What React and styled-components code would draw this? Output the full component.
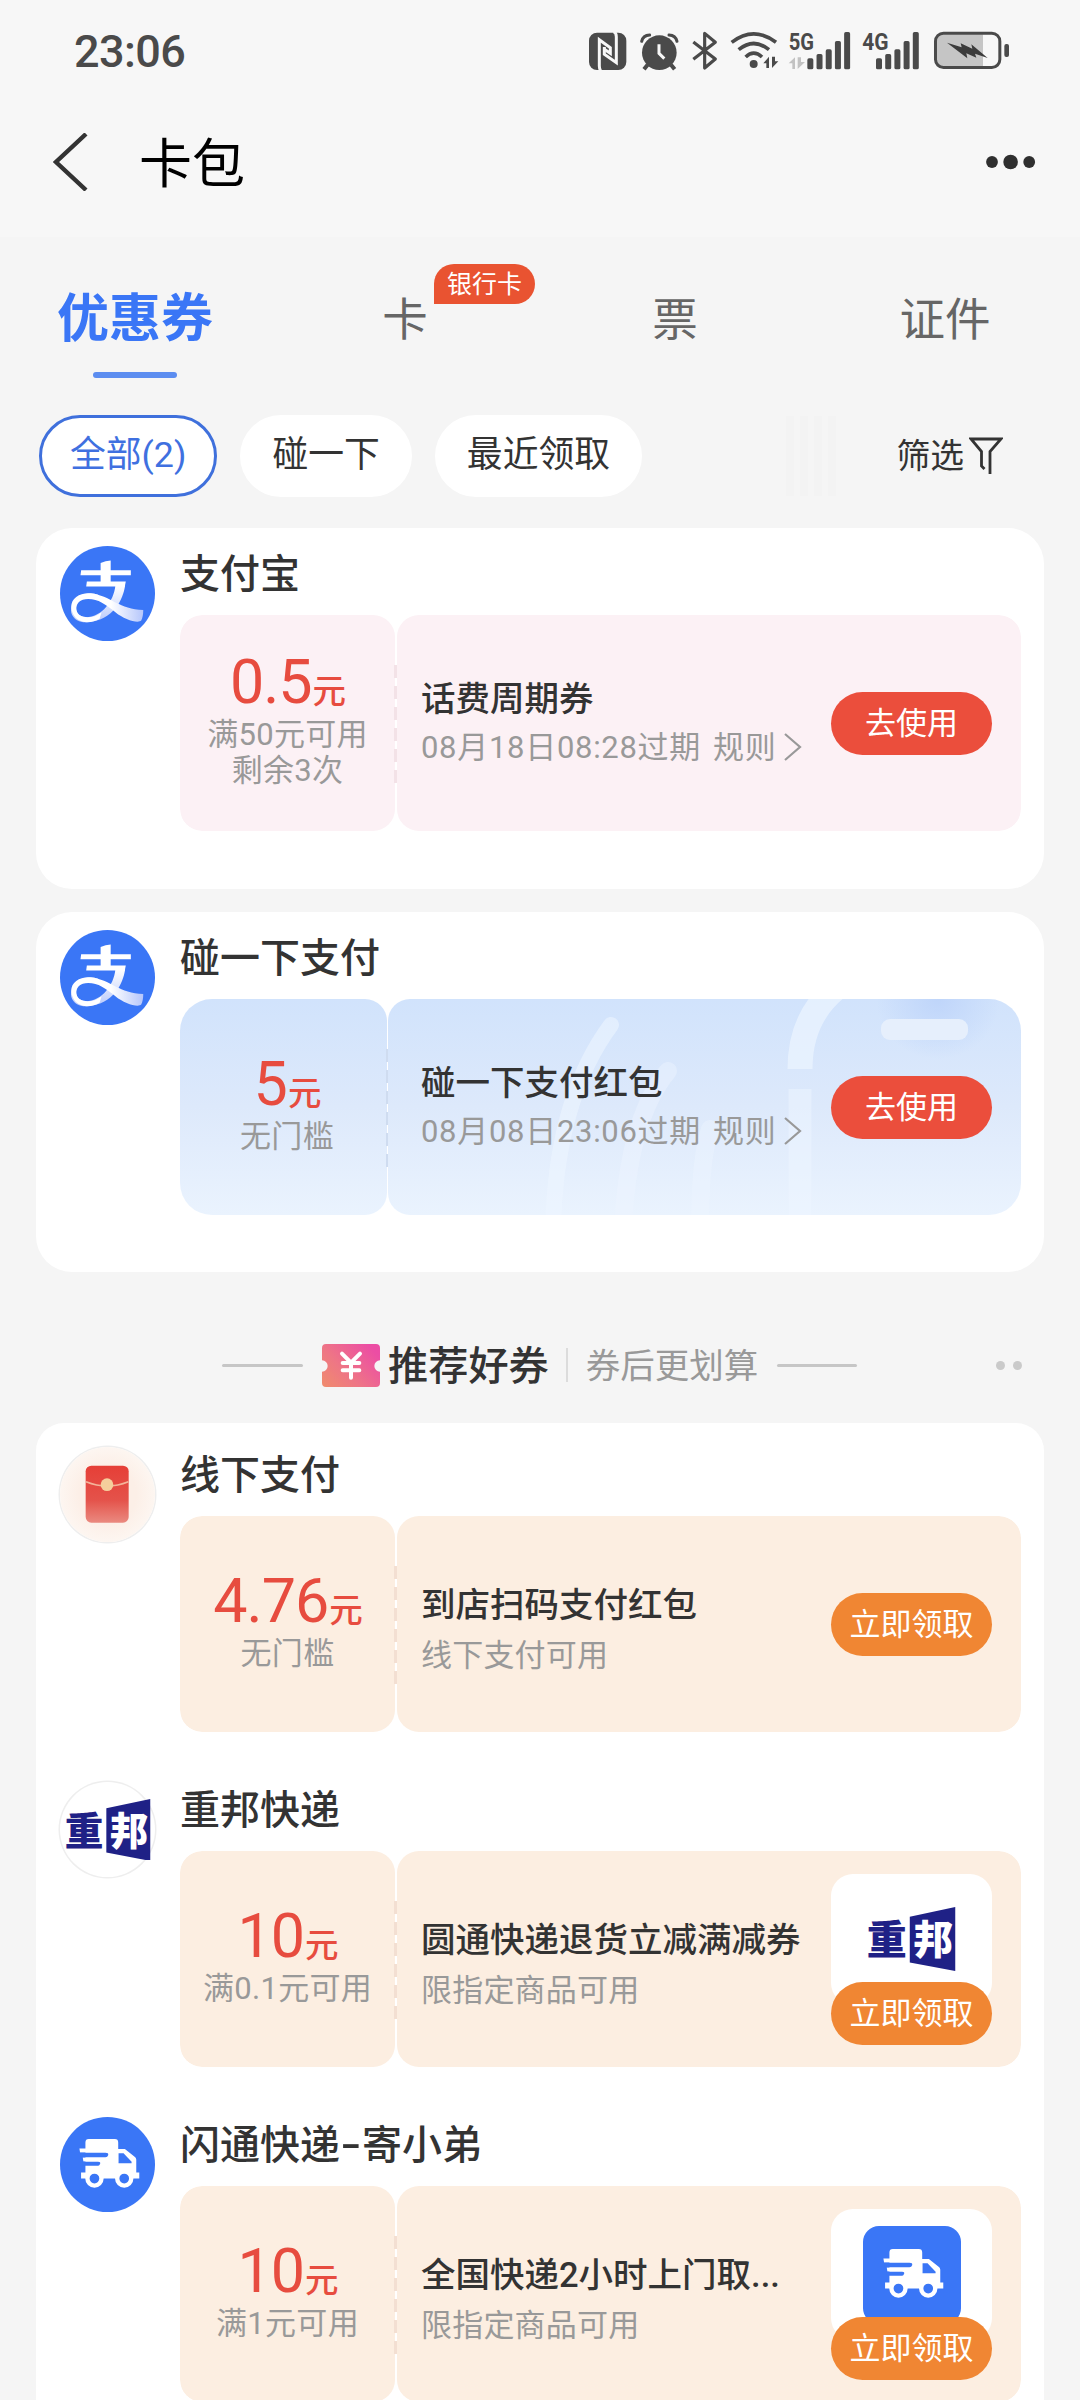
import React from "react";
import styled, { createGlobalStyle } from "styled-components";

const COLORS = {
  page: "#f5f5f5",
  header: "#f7f7f7",
  blue: "#3a76f6",
  text: "#333333",
  muted: "#999999",
  red: "#e74c3f",
  redButton: "#eb4e3c",
  orangeButton: "#f08633",
  status: "#4a4a4a",
  navy: "#1f2186",
};

const TONES = {
  pink: { background: "#fcf1f5", dash: "#f3e2e7" },
  blue: {
    background: "linear-gradient(180deg, #d1e3fc 0%, #dde9fb 50%, #eaf3fe 100%)",
    dash: "#cfdcf0",
  },
  orange: { background: "#fceee1", dash: "#f3dfd2" },
};

const MINE = [
  {
    name: "支付宝",
    logo: "alipay",
    tone: "pink",
    amount: "0.5",
    limits: ["满50元可用", "剩余3次"],
    title: "话费周期券",
    expire: "08月18日08:28过期",
  },
  {
    name: "碰一下支付",
    logo: "alipay",
    tone: "blue",
    amount: "5",
    limits: ["无门槛"],
    title: "碰一下支付红包",
    expire: "08月08日23:06过期",
  },
];

const RECOMMENDED = [
  {
    name: "线下支付",
    logo: "packet",
    amount: "4.76",
    limits: ["无门槛"],
    title: "到店扫码支付红包",
    note: "线下支付可用",
  },
  {
    name: "重邦快递",
    logo: "zhongbang",
    amount: "10",
    limits: ["满0.1元可用"],
    title: "圆通快递退货立减满减券",
    note: "限指定商品可用",
    picture: "zhongbang",
  },
  {
    name: "闪通快递-寄小弟",
    logo: "van",
    amount: "10",
    limits: ["满1元可用"],
    title: "全国快递2小时上门取...",
    note: "限指定商品可用",
    picture: "van",
  },
];

const StatusIcons = () => (
  <IconRow>
    <svg width="44.67" height="42" viewBox="86 90 134 126">
      <rect x="86" y="98" width="112" height="112" rx="24" fill={COLORS.status} />
      <g fill="none" stroke={COLORS.header} strokeWidth="9">
        <path d="M121 213Q117 207 117 198V119L150 143V160L132 148" />
        <path d="M160 95Q168 99 168 110V188L132 163V141" />
      </g>
    </svg>
    <svg width="51.67" height="42" viewBox="220 90 155 126">
      <circle cx="299" cy="158" r="52" fill={COLORS.status} />
      <g fill="none" stroke={COLORS.status}>
        <path d="M246 124Q250 106 270 105" strokeWidth="9" strokeLinecap="round" />
        <path d="M352 124Q348 106 328 105" strokeWidth="9" strokeLinecap="round" />
        <path d="M264 194L253 208M334 194L345 208" strokeWidth="12" />
      </g>
      <path d="M298 133V160L314 176" fill="none" stroke={COLORS.header} strokeWidth="9" />
    </svg>
    <svg width="38.33" height="42" viewBox="375 90 115 126">
      <path
        d="M400 126L466 177L434 204V100L466 127L400 178"
        fill="none"
        stroke={COLORS.status}
        strokeWidth="9.5"
        strokeLinejoin="round"
      />
    </svg>
    <svg width="60" height="42" viewBox="490 90 180 126">
      <g fill="none" stroke={COLORS.status} strokeWidth="11">
        <path d="M516 127Q582 76 649 127" />
        <path d="M537 149Q582 112 628 149" />
        <path d="M558 171Q582 148 607 171" />
      </g>
      <circle cx="582" cy="192" r="12" fill={COLORS.status} />
      <path d="M611 190L628 170V204H620V190ZM637 170V204L656 184H646V170Z" fill={COLORS.status} />
    </svg>
    <svg width="73.33" height="62" viewBox="670 60 220 186">
      <SignalText x="687" y="150" textLength="76" lengthAdjust="spacingAndGlyphs">5G</SignalText>
      <path d="M687 190L706 172V207H698V190ZM714 172V207L736 186H724V172Z" fill="#c2c2c2" />
      <SignalBars x={743} />
    </svg>
    <svg width="70" height="62" viewBox="890 60 210 186">
      <SignalText x="906" y="150" textLength="79" lengthAdjust="spacingAndGlyphs">4G</SignalText>
      <SignalBars x={947} />
    </svg>
    <svg width="83.33" height="42" viewBox="1100 90 250 126">
      <path d="M1142 103H1268V200H1142Q1130 200 1130 188V115Q1130 103 1142 103Z" fill="#c5c5c5" />
      <rect
        x="1125.5"
        y="99.5"
        width="193"
        height="103"
        rx="24"
        fill="none"
        stroke={COLORS.status}
        strokeWidth="9"
      />
      <rect x="1332" y="132" width="14" height="39" rx="6" fill={COLORS.status} />
      <path
        d="M1160 128L1204 142L1201 130L1236 146L1233 133L1282 174L1244 161L1248 173L1218 160L1221 175Z"
        fill="#3b3b3b"
      />
    </svg>
  </IconRow>
);

const SignalBars = ({ x }) =>
  [175, 162, 148, 123, 96].map((top, i) => (
    <rect
      key={top}
      x={x + i * 27.6}
      y={top}
      width="18"
      height={208 - top}
      rx="5"
      fill={COLORS.status}
    />
  ));

const AlipayLogo = () => (
  <svg width="95" height="95" viewBox="0 0 283 283">
    <defs>
      <linearGradient id="leg" x1="0" y1="0" x2="0" y2="1">
        <stop offset="0" stopColor="#ffffff" />
        <stop offset="1" stopColor="#b9c9fb" />
      </linearGradient>
      <linearGradient id="tail" x1="0" y1="0" x2="1" y2="0">
        <stop offset="0.55" stopColor="#ffffff" />
        <stop offset="1" stopColor="#b5c6fb" />
      </linearGradient>
    </defs>
    <circle cx="141.5" cy="141.5" r="141.5" fill={COLORS.blue} />
    <path d="M121 51Q136 43 151 43V112H121Z" fill="#fff" />
    <path d="M63 72H211V87H61ZM80 106H196L193 121H78Z" fill="#fff" />
    <path
      d="M165 118H194C188 158 160 224 80 227C30 228 24 184 42 162C56 144 84 137 114 145L106 158C80 150 58 157 51 172C42 192 52 212 82 212C124 210 160 166 165 118Z"
      fill="url(#leg)"
    />
    <path
      d="M34 182C32 154 62 138 92 141C150 148 178 190 248 191C248 204 246 215 242 222C232 232 190 218 166 198C136 174 114 158 84 158C60 158 46 172 49 190C52 204 62 212 82 212C98 212 112 206 124 197L118 217C106 224 92 228 78 227C52 226 35 208 34 182Z"
      fill="url(#tail)"
    />
  </svg>
);

const PacketLogo = () => (
  <svg width="95" height="95" viewBox="0 0 285 285">
    <defs>
      <linearGradient id="packet" x1="0" y1="0" x2="0" y2="1">
        <stop offset="0" stopColor="#e63f37" />
        <stop offset="0.6" stopColor="#e4524a" />
        <stop offset="1" stopColor="#ea8a80" />
      </linearGradient>
      <radialGradient id="packetBg">
        <stop offset="0.6" stopColor="#fcefe7" />
        <stop offset="1" stopColor="#fdf6f1" />
      </radialGradient>
    </defs>
    <circle cx="142.5" cy="142.5" r="142.5" fill="url(#packetBg)" />
    <rect x="77" y="56" width="129" height="171" rx="17" fill="url(#packet)" />
    <path d="M78 104Q142 130 205 104" fill="none" stroke="#f3b49a" strokeWidth="5" />
    <circle cx="141" cy="113" r="19" fill="#f5cf9c" />
  </svg>
);

const ZhongbangLogo = ({ width }) => (
  <svg width={width} height={width * 0.72} viewBox="0 0 258 186">
    <path d="M124 28L256 0V186L124 161Z" fill={COLORS.navy} />
    <LogoText x="-1" y="137" fill={COLORS.navy}>
      重
    </LogoText>
    <LogoText x="134" y="137" fill="#fff">
      邦
    </LogoText>
  </svg>
);

// body, cab, wheels, then the speed lines cut out of the rear
const VanDrawing = () => (
  <svg width="95" height="95" viewBox="0 0 284 284">
    <path
      d="M76 76Q76 66 86 66H164Q174 66 174 76V96H194L225 120Q228 123 228 128V166H237V184H217A26 26 0 0 1 167 184H129A26 26 0 0 1 79 184H63V166H76Z"
      fill="#fff"
    />
    <path d="M58 94H90V106H60ZM68 121H90V133H70Z" fill="#fff" />
    <path d="M60 107H136Q146 107 144 114Q142 120 136 120H60ZM68 134H114Q122 134 120 140Q118 146 114 146H68Z" fill={COLORS.blue} />
    <path d="M175 108H190L214 134V138H175Z" fill={COLORS.blue} />
    <g fill={COLORS.blue} stroke="#fff" strokeWidth="13">
      <circle cx="103" cy="184" r="21" />
      <circle cx="192" cy="184" r="21" />
    </g>
  </svg>
);

const Avatar = ({ kind }) => {
  if (kind === "alipay") {
    return (
      <AvatarCircle>
        <AlipayLogo />
      </AvatarCircle>
    );
  }
  if (kind === "van") {
    return (
      <AvatarCircle $fill={COLORS.blue}>
        <VanDrawing />
      </AvatarCircle>
    );
  }
  return (
    <AvatarCircle $bordered>
      {kind === "packet" ? <PacketLogo /> : <ZhongbangLogo width={86} />}
    </AvatarCircle>
  );
};

const TapPattern = () => (
  <Pattern width="634" height="216" viewBox="0 0 634 216">
    <defs>
      <radialGradient id="glow">
        <stop offset="0" stopColor="#bfd5fa" />
        <stop offset="1" stopColor="#bfd5fa" stopOpacity="0" />
      </radialGradient>
    </defs>
    <ellipse cx="550" cy="0" rx="62" ry="60" fill="url(#glow)" />
    <g fill="none" stroke="#edf5ff" strokeLinecap="round">
      <path d="M223 26Q168 100 165 230" strokeWidth="16" strokeOpacity="0.6" />
      <path d="M280 72Q240 120 235 230" strokeWidth="18" strokeOpacity="0.45" />
      <path d="M322 130Q312 160 312 230" strokeWidth="18" strokeOpacity="0.4" />
      <path d="M452 -14Q412 16 412 70" strokeWidth="25" strokeOpacity="0.7" strokeLinecap="butt" />
      <path d="M412 90V216" strokeWidth="23" strokeOpacity="0.5" strokeLinecap="butt" />
    </g>
    <rect x="493" y="20" width="87" height="21" rx="9" fill="#e6effc" />
  </Pattern>
);

const Coupon = ({ item, tone }) => {
  const isMine = Boolean(item.expire);
  return (
    <CouponRow $tone={tone}>
      <Price $tone={tone}>
        <Amount>
          {item.amount}
          <Unit>元</Unit>
        </Amount>
        {item.limits.map((limit) => (
          <Limit key={limit}>{limit}</Limit>
        ))}
        <Dashes $tone={tone} />
      </Price>
      <Detail $tone={tone}>
        {tone === "blue" && <TapPattern />}
        <Info $mine={isMine}>
          <CouponTitle>{item.title}</CouponTitle>
          {isMine ? (
            <Note $mine>
              {item.expire}
              <Rules>规则</Rules>
              <svg width="18" height="28" viewBox="0 0 18 28">
                <path d="M1 1L16 14L1 27" fill="none" stroke={COLORS.muted} strokeWidth="2.2" />
              </svg>
            </Note>
          ) : (
            <Note>{item.note}</Note>
          )}
        </Info>
        {item.picture ? (
          <PictureAction>
            <PictureBox>
              {item.picture === "van" ? (
                <VanTile>
                  <VanDrawing />
                </VanTile>
              ) : (
                <ZhongbangLogo width={89} />
              )}
            </PictureBox>
            <ActionButton $color={COLORS.orangeButton}>立即领取</ActionButton>
          </PictureAction>
        ) : (
          <ActionButton $color={isMine ? COLORS.redButton : COLORS.orangeButton}>
            {isMine ? "去使用" : "立即领取"}
          </ActionButton>
        )}
      </Detail>
    </CouponRow>
  );
};

const Merchant = ({ item, tone }) => {
  const [head, tail] = item.name.split("-");
  return (
    <MerchantRow>
      <Avatar kind={item.logo} />
      <MerchantBody>
        <MerchantName>
          {head}
          {tail && <Hyphen>-</Hyphen>}
          {tail}
        </MerchantName>
        <Coupon item={item} tone={tone} />
      </MerchantBody>
    </MerchantRow>
  );
};

const App = () => {
  return (
    <Page>
      <GlobalStyle />
      <Header>
        <StatusBar>
          <Clock>23:06</Clock>
          <StatusIcons />
        </StatusBar>
        <NavBar>
          <svg width="35" height="58" viewBox="0 0 35 58">
            <path d="M33 1L3 29L33 57" fill="none" stroke="#333" strokeWidth="4.4" />
          </svg>
          <NavTitle>卡包</NavTitle>
          <svg width="52" height="16" viewBox="0 0 52 16">
            <g fill="#2f2f2f">
              <circle cx="7" cy="8" r="5.9" />
              <circle cx="25.6" cy="8" r="7.3" />
              <circle cx="44.2" cy="8" r="5.9" />
            </g>
          </svg>
        </NavBar>
      </Header>

      <Tabs>
        <Tab $active>
          优惠券
          <Underline />
        </Tab>
        <Tab>
          卡<Badge>银行卡</Badge>
        </Tab>
        <Tab>票</Tab>
        <Tab>证件</Tab>
      </Tabs>

      <Filters>
        <Pill $active>全部(2)</Pill>
        <Pill>碰一下</Pill>
        <Pill>最近领取</Pill>
        <Fade />
        <FilterButton>
          <span>筛选</span>
          <svg width="34" height="38" viewBox="0 0 34 38">
            <path
              d="M15.5 32L12.5 29V14.5L2 2H32L21 14.5V37"
              fill="none"
              stroke="#333"
              strokeWidth="2.8"
            />
          </svg>
        </FilterButton>
      </Filters>

      {MINE.map((item, i) => (
        <MineCard key={item.name} $height={i === 0 ? 361 : 360}>
          <Merchant item={item} tone={item.tone} />
        </MineCard>
      ))}

      <SectionTitle>
        <Rule $width={81} />
        <svg width="58" height="43" viewBox="0 0 174 129">
          <defs>
            <linearGradient id="ticket" x1="0" y1="1" x2="1" y2="0.3">
              <stop offset="0" stopColor="#f08c6c" />
              <stop offset="0.45" stopColor="#ee7586" />
              <stop offset="1" stopColor="#ec4da4" />
            </linearGradient>
          </defs>
          <path
            d="M12 0H162Q174 0 174 12V49A17 17 0 0 0 174 83V117Q174 129 162 129H12Q0 129 0 117V83A17 17 0 0 0 0 49V12Q0 0 12 0Z"
            fill="url(#ticket)"
          />
          <path
            d="M60 29L87 56L114 29M87 56V101M62 57H112M62 79H112"
            fill="none"
            stroke="#fff"
            strokeWidth="12"
            strokeLinecap="round"
          />
        </svg>
        <SectionName>推荐好券</SectionName>
        <SectionDivider />
        <SectionHint>券后更划算</SectionHint>
        <Rule $width={80} />
        <MoreDots>
          <span />
          <span />
        </MoreDots>
      </SectionTitle>

      <RecommendCard>
        {RECOMMENDED.map((item) => (
          <Merchant key={item.name} item={item} tone="orange" />
        ))}
      </RecommendCard>
    </Page>
  );
};

const GlobalStyle = createGlobalStyle`
  * {
    box-sizing: border-box;
  }

  body {
    margin: 0;
    background: ${COLORS.page};
  }

  svg {
    display: block;
    flex-shrink: 0;
  }
`;

const Page = styled.div`
  width: 1080px;
  height: 2400px;
  overflow: hidden;
  display: flex;
  flex-direction: column;
  background: ${COLORS.page};
  color: ${COLORS.text};
  font-family: Roboto, "Noto Sans CJK SC", sans-serif;
  white-space: nowrap;
`;

const Header = styled.header`
  height: 237px;
  flex-shrink: 0;
  background: ${COLORS.header};
`;

const StatusBar = styled.div`
  height: 102px;
  padding: 0 70px 0 74px;
  display: flex;
  align-items: center;
  justify-content: space-between;
`;

const Clock = styled.div`
  font-size: 45px;
  font-weight: 500;
  color: ${COLORS.status};
  letter-spacing: -0.6px;
`;

const IconRow = styled.div`
  display: flex;
  align-items: center;
`;

const SignalText = styled.text`
  font-family: Roboto, sans-serif;
  font-size: 74px;
  font-weight: 700;
  fill: ${COLORS.status};
`;

const NavBar = styled.div`
  height: 120px;
  padding: 0 43px 0 53px;
  display: flex;
  align-items: center;
`;

const NavTitle = styled.h1`
  flex: 1;
  margin: 0 0 0 51px;
  padding-top: 5px;
  font-size: 53px;
  font-weight: 400;
  line-height: 60px;
  color: #000;
`;

const Tabs = styled.nav`
  display: grid;
  grid-template-columns: repeat(4, 1fr);
  height: 141px;
  flex-shrink: 0;
`;

const Tab = styled.div`
  position: relative;
  display: flex;
  flex-direction: column;
  align-items: center;
  padding-top: ${({ $active }) => ($active ? 49 : 50)}px;
  line-height: 68px;
  font-size: ${({ $active }) => ($active ? 52 : 45.5)}px;
  font-weight: ${({ $active }) => ($active ? 700 : 400)};
  color: ${({ $active }) => ($active ? COLORS.blue : "#666")};
`;

const Underline = styled.div`
  width: 84px;
  height: 6px;
  margin-top: 18px;
  border-radius: 3px;
  background: #5c8df0;
`;

const Badge = styled.span`
  position: absolute;
  left: 164px;
  top: 27px;
  width: 101px;
  height: 40px;
  border-radius: 20px 20px 20px 0;
  background: #e95331;
  color: #fff;
  font-size: 25px;
  line-height: 41px;
  text-align: center;
`;

const Filters = styled.div`
  display: flex;
  align-items: center;
  gap: 23px;
  flex-shrink: 0;
  height: 82px;
  margin: 37px 77px 31px 39px;
`;

const Pill = styled.div`
  height: 82px;
  padding: 0 ${({ $active }) => ($active ? 28 : 32)}px;
  border: ${({ $active }) => ($active ? "3px solid #3f70dc" : "0")};
  border-radius: 41px;
  background: #fff;
  color: ${({ $active }) => ($active ? "#3f70e0" : COLORS.text)};
  font-size: 35.8px;
  line-height: ${({ $active }) => ($active ? 75 : 81)}px;
`;

const Fade = styled.div`
  width: 55px;
  height: 80px;
  margin-left: auto;
  background: repeating-linear-gradient(90deg, #f3f3f3 0 8px, #f5f5f5 8px 14px);
`;

const FilterButton = styled.div`
  display: flex;
  align-items: center;
  gap: 5px;
  margin-left: 32px;
  font-size: 33.8px;

  span {
    padding-bottom: 5px;
  }
`;

const Card = styled.section`
  flex-shrink: 0;
  margin: 0 36px;
  padding: 0 23px 0 24px;
  background: #fff;
`;

const MineCard = styled(Card)`
  height: ${({ $height }) => $height}px;
  margin-bottom: 23px;
  padding-top: 18px;
  border-radius: 36px;
`;

const RecommendCard = styled(Card)`
  display: flex;
  flex-direction: column;
  gap: 50px;
  padding-top: 24px;
  border-radius: 28px 28px 0 0;
`;

const MerchantRow = styled.div`
  display: flex;
  align-items: flex-start;
`;

const AvatarCircle = styled.div`
  width: 95px;
  height: 95px;
  flex-shrink: 0;
  display: flex;
  align-items: center;
  justify-content: center;
  border-radius: 50%;
  background: ${({ $fill }) => $fill || "#fff"};
  box-shadow: ${({ $bordered }) => ($bordered ? "0 0 0 1.5px #eeeeee" : "none")};
`;

const MerchantBody = styled.div`
  flex: 1;
  margin-left: 25px;
`;

const MerchantName = styled.div`
  height: 69px;
  padding-top: 2px;
  font-size: 40px;
  font-weight: 500;
  line-height: 54px;
`;

const Hyphen = styled.span`
  display: inline-block;
  width: 22px;
  text-align: center;
  transform: scaleX(1.5);
`;

const CouponRow = styled.div`
  display: flex;
  gap: ${({ $tone }) => ($tone === "blue" ? 1 : 2)}px;
  height: 216px;
  border-radius: ${({ $tone }) => ($tone === "blue" ? 32 : 22)}px;
  overflow: hidden;
`;

const Price = styled.div`
  position: relative;
  width: ${({ $tone }) => ($tone === "blue" ? 207 : 215)}px;
  padding: 0 0 10px ${({ $tone }) => ($tone === "blue" ? 7 : 0)}px;
  display: flex;
  flex-direction: column;
  align-items: center;
  justify-content: center;
  border-radius: 22px;
  background: ${({ $tone }) => TONES[$tone].background};
`;

const Amount = styled.div`
  color: ${COLORS.red};
  font-size: 61px;
  line-height: 68px;
  height: 69px;
  letter-spacing: -1px;
`;

const Unit = styled.span`
  margin-left: 1px;
  font-size: 33.5px;
  font-weight: 500;
`;

const Limit = styled.div`
  color: ${COLORS.muted};
  font-size: 31px;
  line-height: 36px;
  letter-spacing: 0.3px;
`;

const Dashes = styled.div`
  position: absolute;
  right: -2px;
  top: 50px;
  width: 3px;
  height: 118px;
  background: repeating-linear-gradient(
    180deg,
    ${({ $tone }) => TONES[$tone].dash} 0 13px,
    transparent 13px 21px
  );
`;

const Detail = styled.div`
  position: relative;
  flex: 1;
  padding: 0 29px 0 ${({ $tone }) => ($tone === "blue" ? 33 : 24)}px;
  display: flex;
  align-items: center;
  justify-content: space-between;
  border-radius: 22px;
  background: ${({ $tone }) => TONES[$tone].background};
  overflow: hidden;
`;

const Pattern = styled.svg`
  position: absolute;
  left: 0;
  top: 0;
`;

const Info = styled.div`
  position: relative;
  width: 388px;
  padding: ${({ $mine }) => ($mine ? "0 0 2px" : "13px 0 0")};
`;

const CouponTitle = styled.div`
  font-size: 34.5px;
  font-weight: 500;
  line-height: 50px;
`;

const Note = styled.div`
  display: flex;
  align-items: center;
  color: ${COLORS.muted};
  font-size: 31px;
  line-height: ${({ $mine }) => ($mine ? 47 : 51)}px;
  letter-spacing: ${({ $mine }) => ($mine ? 0.7 : 0.2)}px;
`;

const Rules = styled.span`
  margin: 0 8px 0 12px;
`;

const ActionButton = styled.button`
  position: relative;
  width: 161px;
  height: 63px;
  padding: 0;
  border: 0;
  border-radius: 32px;
  background: ${({ $color }) => $color};
  color: #fff;
  font-family: inherit;
  font-size: 31px;
  line-height: 63px;
`;

const PictureAction = styled.div`
  display: flex;
  flex-direction: column;
  padding-top: 1px;
`;

const PictureBox = styled.div`
  width: 161px;
  height: 131px;
  margin-bottom: -23px;
  display: flex;
  align-items: center;
  justify-content: center;
  border-radius: 22px;
  background: #fff;
`;

const VanTile = styled.div`
  width: 98px;
  height: 98px;
  display: flex;
  align-items: center;
  justify-content: center;
  border-radius: 16px;
  background: ${COLORS.blue};
`;

const LogoText = styled.text`
  font-family: "Noto Sans CJK SC", sans-serif;
  font-size: 116px;
  font-weight: 900;
`;

const SectionTitle = styled.div`
  position: relative;
  display: flex;
  align-items: center;
  height: 128px;
  flex-shrink: 0;
  padding: 12px 0 0 222px;
`;

const Rule = styled.div`
  width: ${({ $width }) => $width}px;
  height: 3px;
  margin-right: 19px;
  border-radius: 2px;
  background: #c6c6c6;
`;

const SectionName = styled.div`
  margin-left: 8px;
  padding-bottom: 5px;
  font-size: 40.2px;
  font-weight: 500;
`;

const SectionDivider = styled.div`
  width: 2px;
  height: 34px;
  margin: 0 18px 0 17px;
  background: #dcdcdc;
`;

const SectionHint = styled.div`
  margin-right: 19px;
  padding-bottom: 4px;
  color: ${COLORS.muted};
  font-size: 34.5px;
`;

const MoreDots = styled.div`
  display: flex;
  gap: 8px;
  margin: 1px 58px 0 auto;

  span {
    width: 9px;
    height: 9px;
    border-radius: 50%;
    background: #cacaca;
  }
`;

export default App;
